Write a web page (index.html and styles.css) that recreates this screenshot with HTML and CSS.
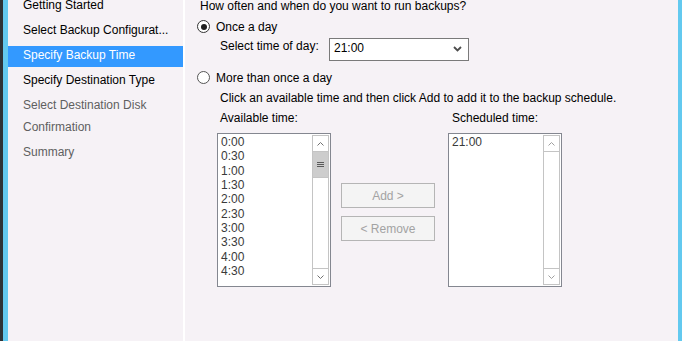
FILE: index.html
```html
<!DOCTYPE html>
<html>
<head>
<meta charset="utf-8">
<link rel="stylesheet" href="styles.css">
</head>
<body>
<div class="window">
  <div class="edge-dark"></div>
  <div class="edge-blue"></div>
  <nav class="nav">
    <div class="nav-item">Getting Started</div>
    <div class="nav-item">Select Backup Configurat...</div>
    <div class="nav-item selected">Specify Backup Time</div>
    <div class="nav-item">Specify Destination Type</div>
    <div class="nav-item dim short">Select Destination Disk</div>
    <div class="nav-item dim">Confirmation</div>
    <div class="nav-item dim">Summary</div>
  </nav>
  <div class="sep"></div>
  <main class="content">
    <div class="question">How often and when do you want to run backups?</div>
    <div class="radio-row once">
      <span class="radio checked"></span><span>Once a day</span>
    </div>
    <div class="time-row">
      <span class="time-label">Select time of day:</span>
      <div class="select">
        <span>21:00</span>
        <svg class="chev" width="9" height="6" viewBox="0 0 9 6"><path d="M1 1 L4.5 4.5 L8 1" fill="none" stroke="#4d4d4d" stroke-width="1.8"/></svg>
      </div>
    </div>
    <div class="radio-row more">
      <span class="radio"></span><span>More than once a day</span>
    </div>
    <div class="hint">Click an available time and then click Add to add it to the backup schedule.</div>
    <div class="labels">
      <span class="lbl-avail">Available time:</span>
      <span>Scheduled time:</span>
    </div>
    <div class="lists">
      <div class="listbox">
        <div class="items">
          <div>0:00</div><div>0:30</div><div>1:00</div><div>1:30</div><div>2:00</div>
          <div>2:30</div><div>3:00</div><div>3:30</div><div>4:00</div><div>4:30</div>
        </div>
        <div class="scrollbar">
          <div class="sb-btn up"><svg width="7" height="4" viewBox="0 0 7 4"><path d="M0.5 3.5 L3.5 0.5 L6.5 3.5" fill="none" stroke="#707070" stroke-width="1"/></svg></div>
          <div class="thumb"><span></span><span></span><span></span></div>
          <div class="track"></div>
          <div class="sb-btn down"><svg width="7" height="4" viewBox="0 0 7 4"><path d="M0.5 0.5 L3.5 3.5 L6.5 0.5" fill="none" stroke="#707070" stroke-width="1"/></svg></div>
        </div>
      </div>
      <div class="buttons">
        <div class="btn">Add &gt;</div>
        <div class="btn">&lt; Remove</div>
      </div>
      <div class="listbox">
        <div class="items">
          <div>21:00</div>
        </div>
        <div class="scrollbar">
          <div class="sb-btn up"><svg width="7" height="4" viewBox="0 0 7 4"><path d="M0.5 3.5 L3.5 0.5 L6.5 3.5" fill="none" stroke="#a0a0a0" stroke-width="1"/></svg></div>
          <div class="track"></div>
          <div class="sb-btn down"><svg width="7" height="4" viewBox="0 0 7 4"><path d="M0.5 0.5 L3.5 3.5 L6.5 0.5" fill="none" stroke="#a0a0a0" stroke-width="1"/></svg></div>
        </div>
      </div>
    </div>
  </main>
  <div class="edge-blue edge-right"></div>
</div>
</body>
</html>
```
FILE: styles.css
```css
* { box-sizing: border-box; }
html, body {
  margin: 0;
  padding: 0;
  width: 682px;
  height: 341px;
  overflow: hidden;
}
body {
  font-family: "Liberation Sans", Arial, sans-serif;
  font-size: 12px;
  line-height: 17px;
  color: #000;
  background: #f6f2f6;
}
.window {
  display: flex;
  height: 341px;
}
.edge-dark { width: 3px; background: #2e3236; }
.edge-blue { width: 5px; background: #63c9ef; }
.edge-right { width: 4px; }
.nav {
  width: 175px;
  background: #f6f2f6;
  margin-top: -4px;
}
.nav-item {
  height: 21px;
  margin-bottom: 4px;
  padding-left: 15px;
  padding-top: 1px;
  white-space: nowrap;
  overflow: hidden;
}
.nav-item.short { margin-bottom: 1px; }
.nav-item.selected { background: #3399ff; color: #fff; }
.nav-item.dim { color: #5f5f5f; }
.sep { width: 2px; background: #ffffff; }
.content {
  flex: 1;
  padding-left: 15px;
  background: #f6f2f6;
}
.question { margin-top: -2px; height: 15px; }
.radio-row {
  display: flex;
  align-items: flex-start;
  height: 15px;
  margin-left: -3px;
}
.radio-row.once { margin-top: 6px; }
.radio-row.more { margin-top: 9px; }
.radio {
  width: 13px;
  height: 13px;
  margin-top: 1px;
  border-radius: 50%;
  border: 1px solid #555;
  background: #fff;
  margin-right: 6px;
  display: flex;
  align-items: center;
  justify-content: center;
}
.radio.checked { border-color: #333; }
.radio.checked::after {
  content: "";
  width: 6px;
  height: 6px;
  border-radius: 50%;
  background: #1f1f1f;
}
.time-row {
  display: flex;
  align-items: flex-start;
  margin-top: 4px;
  padding-left: 20px;
  height: 23px;
}
.time-label { width: 109px; }
.select {
  width: 140px;
  height: 23px;
  border: 1px solid #7a7a7a;
  background: #fff;
  padding-left: 4px;
  padding-right: 6px;
  line-height: 19px;
  display: flex;
  justify-content: space-between;
}
.chev { margin-top: 7px; }
.hint { margin-top: 5px; padding-left: 20px; height: 15px; }
.labels {
  margin-top: 5px;
  padding-left: 20px;
  height: 15px;
  display: flex;
}
.lbl-avail { width: 232px; }
.lists {
  margin-top: 8px;
  padding-left: 17px;
  display: flex;
  align-items: flex-start;
}
.listbox {
  width: 114px;
  height: 154px;
  border: 1px solid #848790;
  background: #fff;
  display: flex;
  padding: 1px 1px 1px 0;
}
.items {
  flex: 1;
  padding-left: 3px;
  margin-top: 0;
  line-height: 14.33px;
  color: #3a3a3a;
}
.scrollbar {
  width: 17px;
  border: 1px solid #c4c4c4;
  display: flex;
  flex-direction: column;
}
.sb-btn {
  height: 16px;
  display: flex;
  align-items: center;
  justify-content: center;
}
.sb-btn.up { border-bottom: 1px solid #c4c4c4; }
.sb-btn.down { border-top: 1px solid #c4c4c4; }
.thumb {
  height: 26px;
  background: #cdcdcd;
  border-bottom: 1px solid #c4c4c4;
  display: flex;
  flex-direction: column;
  align-items: center;
  justify-content: center;
  gap: 1px;
}
.thumb span { width: 7px; height: 1px; background: #5a5a5a; }
.track { flex: 1; }
.buttons {
  margin-left: 10px;
  margin-top: 50px;
  margin-right: 13px;
  display: flex;
  flex-direction: column;
  gap: 8px;
}
.btn {
  width: 94px;
  height: 25px;
  border: 1px solid #b5b5b5;
  background: #f4f4f4;
  color: #a3a3a3;
  text-align: center;
  line-height: 24px;
}
```
